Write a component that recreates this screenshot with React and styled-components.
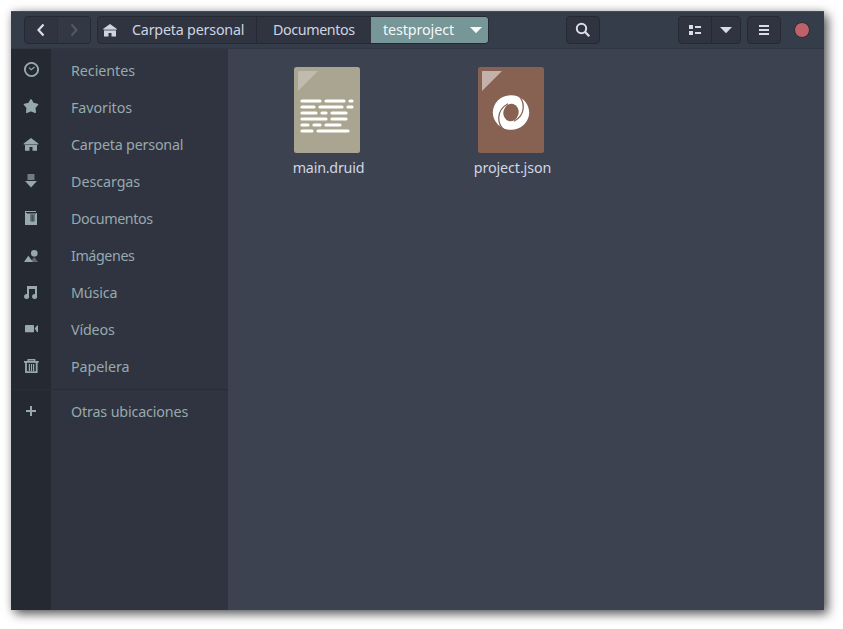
import React from "react";
import styled, { createGlobalStyle, css } from "styled-components";

const GlobalStyle = createGlobalStyle`
  * { box-sizing: border-box; }
  body { margin: 0; background: #fff; overflow: hidden; }
`;

const Desktop = styled.div`
  width: 843px;
  height: 629px;
  padding: 11px 19px 19px 11px;
  background: #fff;
`;

const Window = styled.main`
  display: flex;
  flex-direction: column;
  width: 813px;
  height: 599px;
  background: #3d4251;
  font: 14.3px/20px "Noto Sans", sans-serif;
  color: #d0d6e3;
  box-shadow: 4px 4px 10px rgba(0, 0, 0, 0.62), 0 0 8px rgba(0, 0, 0, 0.14);
`;

const HeaderBar = styled.header`
  display: flex;
  align-items: flex-start;
  height: 38px;
  flex: none;
  padding: 4px 14px 0 13px;
  background: #363d4a;
  border-top: 1px solid #454b57;
  border-bottom: 1px solid #303642;
`;

const ButtonGroup = styled.div`
  display: flex;
  height: 28px;
  margin-left: ${(p) => p.$gap || 0}px;
  border: 1px solid #252932;
  border-radius: 4px;
  background: #2f3440;
  overflow: hidden;
`;

const BarButton = styled.button`
  display: flex;
  align-items: center;
  justify-content: center;
  width: ${(p) => p.$width}px;
  height: 26px;
  padding: 0;
  border: 0;
  color: #d8dee9;
  background: transparent;
  ${(p) => p.$divided && css`border-left: 1px solid #252932;`}
  ${(p) => p.$disabled && css`
    color: #535965;
    background: #323844;
    border-left-color: #2b303a;
  `}
`;

const Crumb = styled.button`
  display: flex;
  align-items: center;
  width: ${(p) => p.$width}px;
  height: 26px;
  padding: 0 0 0 ${(p) => p.$pad}px;
  border: 0;
  font: inherit;
  color: ${(p) => (p.$active ? "#f5f8f8" : "#ced4e0")};
  background: ${(p) => (p.$active ? "#769698" : "transparent")};
  ${(p) => p.$divided && css`border-left: 1px solid #252932;`}
`;

const Label = styled.span`
  white-space: nowrap;
  letter-spacing: ${(p) => p.$track || 0}px;
  margin-left: ${(p) => p.$left || 0}px;
`;

const CrumbArrow = styled.span`
  display: flex;
  margin: 0 4px 0 auto;
`;

const CloseButton = styled.button`
  width: 16px;
  height: 16px;
  margin: 6px 0 0 13px;
  padding: 0;
  border: 1px solid #292d36;
  border-radius: 50%;
  background: #bf616a;
`;

const Content = styled.div`
  display: flex;
  flex: 1;
  min-height: 0;
`;

const Sidebar = styled.nav`
  width: 217px;
  padding-top: 3px;
  background: linear-gradient(90deg, #252932 40px, #2f3440 40px);
  color: #97a9ae;
`;

const Place = styled.a`
  display: flex;
  align-items: flex-start;
  height: 37px;
  padding: 10px 0 0 12px;
`;

const PlaceLabel = styled(Label)`
  margin: -1px 0 0 32px;
`;

const Separator = styled.hr`
  height: 1px;
  margin: 4px 0 3px;
  border: 0;
  background: #292d37;
`;

const FileGrid = styled.section`
  display: grid;
  grid-template-columns: 184px 184px;
  align-content: start;
  padding: 18px 0 0 7px;
`;

const FileItem = styled.figure`
  display: flex;
  flex-direction: column;
  align-items: center;
  margin: 0;
`;

const FileName = styled.figcaption`
  margin: 5px 0 0 3px;
  letter-spacing: ${(p) => p.$track || 0}px;
`;

const Icon = ({ children }) => (
  <svg width="16" height="16" viewBox="0 0 16 16" fill="currentColor">
    {children}
  </svg>
);

const icons = {
  recent: (
    <g fill="none" stroke="currentColor">
      <circle cx="8.5" cy="7.5" r="6.6" strokeWidth="1.9" />
      <path d="M6 5.7 8.2 7.7 11.5 5" strokeWidth="1.1" />
    </g>
  ),
  star: (
    <path d="M8 1 10.2 4.6 14.5 5.5 11.7 8.7 12.2 13.3 8 11.6 3.8 13.3 4.3 8.7 1.5 5.5 5.8 4.6Z" stroke="currentColor" strokeWidth="1.6" strokeLinejoin="round" />
  ),
  home: (
    <>
      <path d="M8 2 15.3 7.5V8.5H.7V7.5Z" />
      <path d="M2 9H14V14.7H9.5V11H6.5V14.7H2Z" />
    </>
  ),
  download: (
    <>
      <path d="M4.5 1H11.5V7H4.5Z" opacity=".65" />
      <path d="M2 8H14L8 14.4Z" />
    </>
  ),
  documents: (
    <>
      <path d="M2 1H13V2H3V3H14V15H2Z" />
      <path d="M4 3.5H13" stroke="#252932" opacity=".5" />
      <path d="M7 4H12V10.5Q11.5 12 9.5 12T7 10.5Z" fill="#66757c" />
      <path d="M8.5 5H10.5V11H8.5Z" fill="#46525a" />
    </>
  ),
  images: (
    <>
      <path d="M7 15 11.3 10 15 15Z" opacity=".5" />
      <path d="M1 15 5.3 8.7 10 15Z" />
      <circle cx="11.3" cy="6.3" r="3.3" />
    </>
  ),
  music: (
    <>
      <path d="M4 2H14V12.5H12V5H6V12.5H4Z" />
      <circle cx="3.6" cy="12.5" r="2.5" />
      <circle cx="11.6" cy="12.5" r="2.5" />
    </>
  ),
  video: (
    <>
      <rect x="2" y="4" width="9" height="7.3" rx=".9" />
      <path d="M11.7 7.5 14 4.5H15V11H14Z" />
    </>
  ),
  trash: (
    <>
      <path d="M5.2 3V1.7H11.7V3" fill="none" stroke="currentColor" strokeWidth="1.4" />
      <path d="M1 3H15.7V4.8H1Z" />
      <path d="M3 4V14.2H13.7V4" fill="none" stroke="currentColor" strokeWidth="1.8" />
      <path d="M6.4 6V13M8.5 6V13M10.6 6V13" stroke="currentColor" strokeWidth="1.2" />
    </>
  ),
  plus: <path d="M7 3H9V7H13V9H9V13H7V9H3V7H7Z" />,
  back: <path d="M10.5 2.5 5.5 8 10.5 13.5" fill="none" stroke="currentColor" strokeWidth="2.2" />,
  forward: <path d="M5.5 2.5 10.5 8 5.5 13.5" fill="none" stroke="currentColor" strokeWidth="2" />,
  headerHome: (
    <>
      <path d="M8 2 15 7V7.5H1V7Z" />
      <path d="M2 7.5H14V9H2Z" opacity=".6" />
      <path d="M2 9H14V14.5H9.5V11H6.5V14.5H2Z" />
    </>
  ),
  search: (
    <g fill="none" stroke="currentColor" strokeWidth="2">
      <circle cx="6.5" cy="6.5" r="4.7" />
      <path d="M9.8 9.8 14.3 14.3" strokeWidth="2.3" />
    </g>
  ),
  list: <path d="M2 3H6V7H2ZM8 4H14V6H8ZM2 9H6V13H2ZM8 10H14V12H8Z" />,
  arrow: <path d="M2 5H14L8 11.2Z" />,
  menu: <path d="M3 3H13V5H3ZM3 7H13V9H3ZM3 11H13V13H3Z" />,
};

const places = [
  ["Recientes", "recent", -0.06],
  ["Favoritos", "star", -0.06],
  ["Carpeta personal", "home", -0.2],
  ["Descargas", "download", -0.06],
  ["Documentos", "documents", -0.4],
  ["Imágenes", "images", -0.42],
  ["Música", "music", -0.12],
  ["Vídeos", "video", -0.16],
  ["Papelera", "trash", -0.04],
];

const textLines = [
  [[7, 27], [31, 51], [55, 59]],
  [[7, 21], [25, 49], [53, 59]],
  [[7, 23], [27, 33], [37, 53]],
  [[7, 33], [37, 53]],
  [[7, 15], [19, 27], [31, 47]],
  [[7, 19], [23, 55]],
];

const TextFileIcon = () => (
  <svg width="66" height="86" viewBox="0 0 66 86">
    <rect width="66" height="86" rx="2.5" fill="#aaa590" />
    <path d="M4 4H24L4 24Z" fill="#c0bcad" />
    <g stroke="#fff" strokeWidth="3.2" strokeLinecap="round">
      {textLines.flatMap((line, row) =>
        line.map(([from, to]) => (
          <path key={`${row}-${from}`} d={`M${from + 1} ${34 + row * 6}H${to - 1}`} />
        ))
      )}
    </g>
  </svg>
);

const swirlGap = "M39.5 27.5C47 34 48.5 47.5 36 54.3";

const JsonFileIcon = () => (
  <svg width="66" height="86" viewBox="0 0 66 86">
    <rect width="66" height="86" rx="2.5" fill="#876253" />
    <path d="M4 4H24L4 24Z" fill="#c4b1a9" />
    <ellipse cx="33" cy="45.5" rx="18.2" ry="17.2" fill="#fff" />
    <ellipse cx="33" cy="45.5" rx="7.6" ry="8.8" fill="#876253" transform="rotate(15 33 45.5)" />
    <g fill="none" stroke="#876253" strokeWidth="1.3">
      <path d={swirlGap} />
      <path d={swirlGap} transform="rotate(180 33 45.5)" />
    </g>
  </svg>
);

export default function App() {
  return (
    <>
      <GlobalStyle />
      <Desktop>
        <Window>
          <HeaderBar>
            <ButtonGroup>
              <BarButton $width={32} aria-label="Atrás"><Icon>{icons.back}</Icon></BarButton>
              <BarButton $width={33} $divided $disabled aria-label="Adelante"><Icon>{icons.forward}</Icon></BarButton>
            </ButtonGroup>
            <ButtonGroup $gap={6}>
              <Crumb $width={158} $pad={4}>
                <Icon>{icons.headerHome}</Icon>
                <Label $left={14} $track={-0.2}>Carpeta personal</Label>
              </Crumb>
              <Crumb $width={115} $pad={16} $divided><Label $track={-0.4}>Documentos</Label></Crumb>
              <Crumb $width={117} $pad={12} $active>
                <Label $track={-0.1}>testproject</Label>
                <CrumbArrow><Icon>{icons.arrow}</Icon></CrumbArrow>
              </Crumb>
            </ButtonGroup>
            <ButtonGroup $gap={77}>
              <BarButton $width={32} aria-label="Buscar"><Icon>{icons.search}</Icon></BarButton>
            </ButtonGroup>
            <ButtonGroup $gap={78}>
              <BarButton $width={32} aria-label="Vista de lista"><Icon>{icons.list}</Icon></BarButton>
              <BarButton $width={29} $divided aria-label="Opciones de vista"><Icon>{icons.arrow}</Icon></BarButton>
            </ButtonGroup>
            <ButtonGroup $gap={6}>
              <BarButton $width={32} aria-label="Menú"><Icon>{icons.menu}</Icon></BarButton>
            </ButtonGroup>
            <CloseButton aria-label="Cerrar" />
          </HeaderBar>
          <Content>
            <Sidebar>
              {places.map(([name, icon, track]) => (
                <Place key={name}>
                  <Icon>{icons[icon]}</Icon>
                  <PlaceLabel $track={track}>{name}</PlaceLabel>
                </Place>
              ))}
              <Separator />
              <Place>
                <Icon>{icons.plus}</Icon>
                <PlaceLabel $track={-0.15}>Otras ubicaciones</PlaceLabel>
              </Place>
            </Sidebar>
            <FileGrid>
              <FileItem>
                <TextFileIcon />
                <FileName $track={-0.22}>main.druid</FileName>
              </FileItem>
              <FileItem>
                <JsonFileIcon />
                <FileName $track={-0.1}>project.json</FileName>
              </FileItem>
            </FileGrid>
          </Content>
        </Window>
      </Desktop>
    </>
  );
}
